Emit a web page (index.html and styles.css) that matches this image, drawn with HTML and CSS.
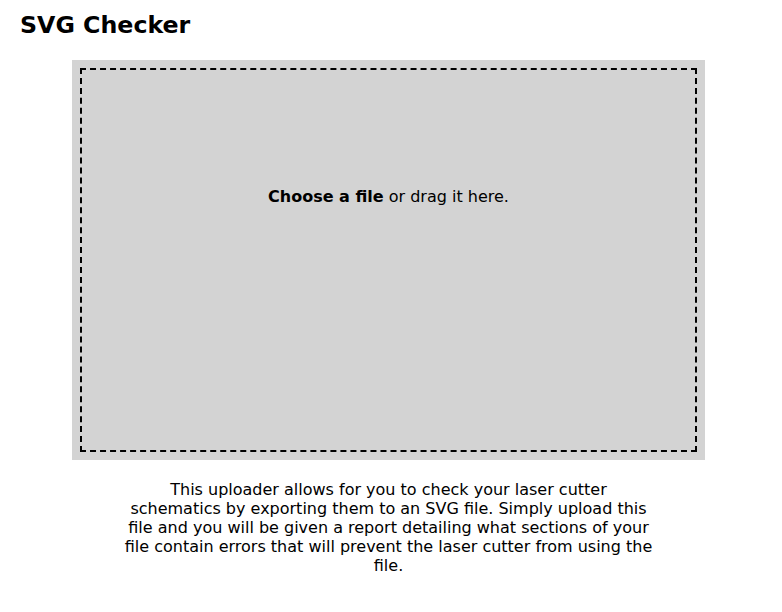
FILE: index.html
```html
<!DOCTYPE html>
<html>
<head>
<meta charset="utf-8">
<link rel="stylesheet" href="styles.css">
</head>
<body>
<h1 class="title">SVG Checker</h1>
<form class="box">
  <div class="box-input">
    <label class="box-label"><strong>Choose a file</strong> or drag it here.</label>
  </div>
</form>
<p class="desc">This uploader allows for you to check your laser cutter schematics by exporting them to an SVG file. Simply upload this file and you will be given a report detailing what sections of your file contain errors that will prevent the laser cutter from using the file.</p>
</body>
</html>
```
FILE: styles.css
```css
html, body {
  background: #fff;
}
body {
  margin: 0;
  padding: 0;
  font-family: "DejaVu Sans", sans-serif;
  font-size: 16px;
  color: #000;
}
.title {
  font-size: 23.7px;
  font-weight: bold;
  margin: 0;
  padding: 11px 0 0 20px;
  line-height: 29px;
}
.box {
  margin: 20px 0 0 72px;
  width: 633px;
  height: 400px;
  background: #d3d3d3;
  outline: 2px dashed #000;
  outline-offset: -10px;
  box-sizing: border-box;
  padding-top: 127px;
}
.box-input {
  text-align: center;
}
.box-label {
  line-height: 19px;
}
.desc {
  width: 529px;
  margin: 20px 0 0 124px;
  text-align: center;
  line-height: 19px;
}
```
